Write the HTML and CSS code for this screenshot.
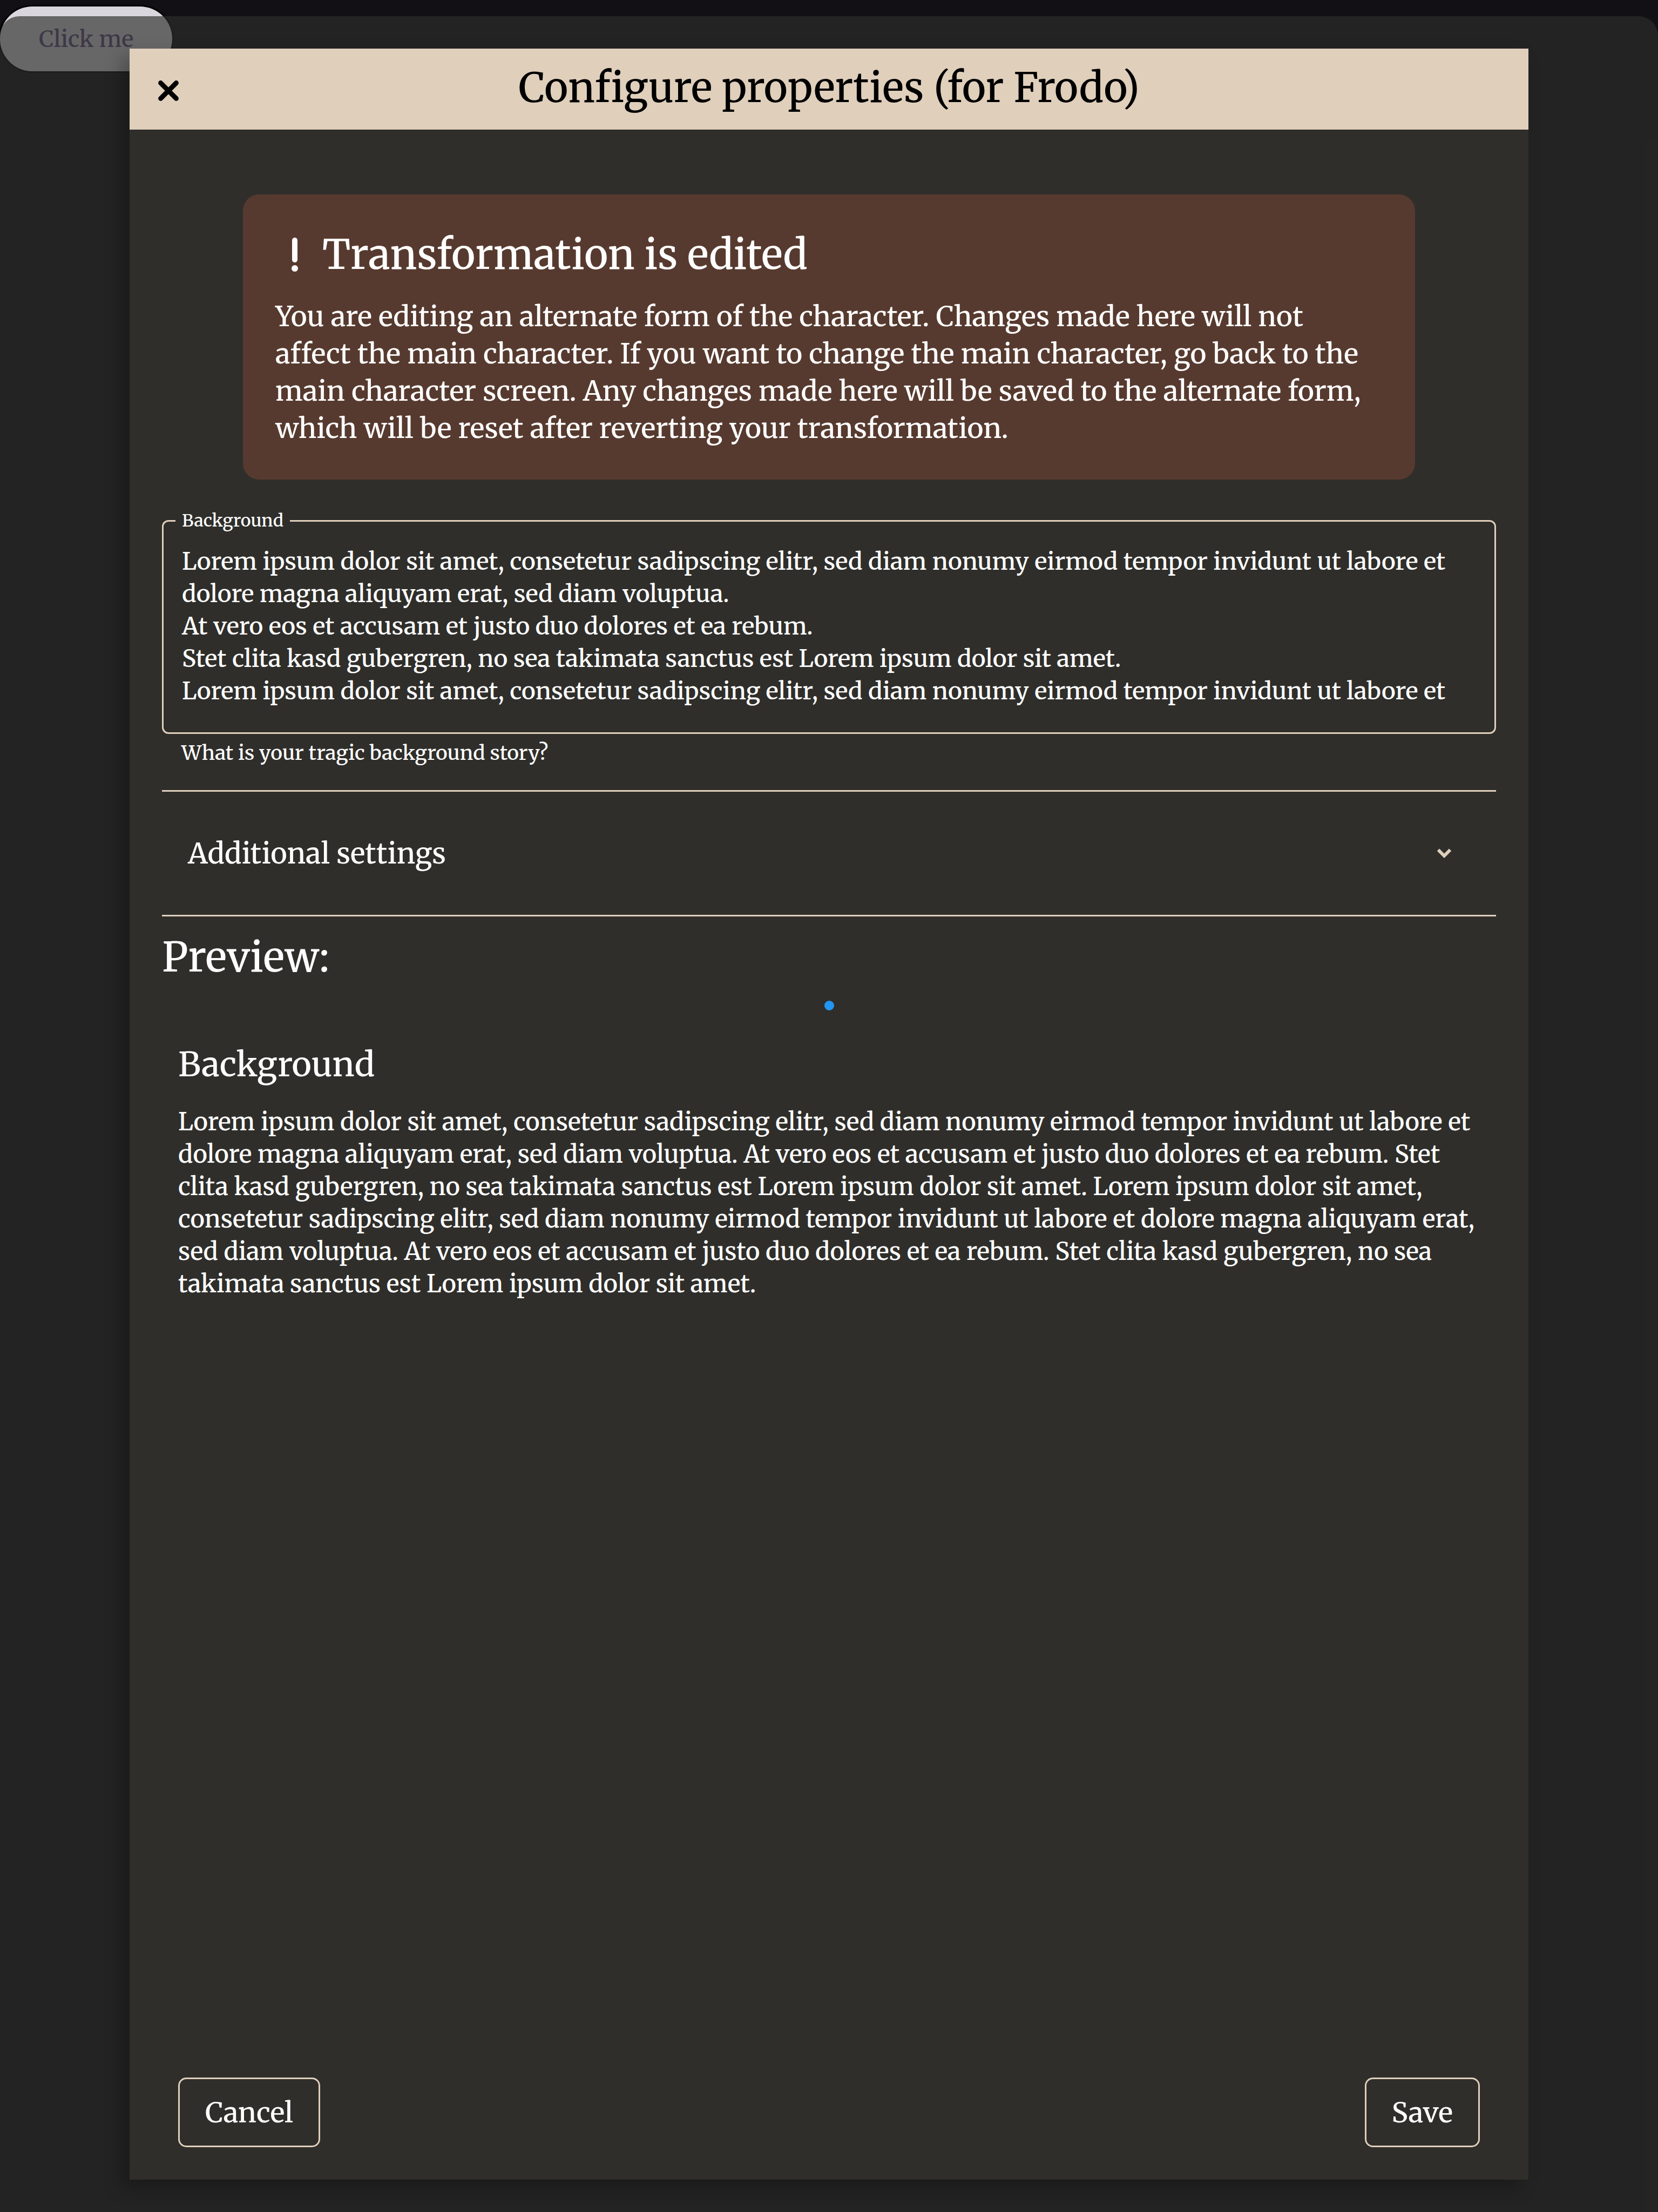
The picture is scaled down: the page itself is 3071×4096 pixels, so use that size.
FILE: index.html
```html
<!DOCTYPE html>
<html lang="en">
<head>
<meta charset="utf-8">
<title>Configure properties</title>
<link rel="stylesheet" href="styles.css">
</head>
<body>
<button class="trigger" type="button">Click me</button>

<div class="backdrop">
  <section class="dialog" role="dialog" aria-labelledby="dialog-title">
    <header class="dialog-header">
      <button class="close" type="button" aria-label="Close">
        <svg viewBox="0 0 24 24" aria-hidden="true"><path d="M7.2 7.2 16.8 16.8M16.8 7.2 7.2 16.8"/></svg>
      </button>
      <h1 class="dialog-title" id="dialog-title">Configure properties (for Frodo)</h1>
    </header>

    <div class="dialog-body">
      <div class="alert" role="alert">
        <h2 class="alert-title">
          <svg class="alert-icon" viewBox="0 0 72 72" aria-hidden="true"><rect x="31" y="5" width="10" height="46" rx="5"/><circle cx="36" cy="62" r="6"/></svg>
          Transformation is edited
        </h2>
        <p class="alert-text">You are editing an alternate form of the character. Changes made here will not affect the main character. If you want to change the main character, go back to the main character screen. Any changes made here will be saved to the alternate form, which will be reset after reverting your transformation.</p>
      </div>

      <fieldset class="field">
        <legend class="field-legend"><label for="background">Background</label></legend>
        <textarea class="field-input" id="background" rows="5" aria-describedby="background-hint">Lorem ipsum dolor sit amet, consetetur sadipscing elitr, sed diam nonumy eirmod tempor invidunt ut labore et dolore magna aliquyam erat, sed diam voluptua.
At vero eos et accusam et justo duo dolores et ea rebum.
Stet clita kasd gubergren, no sea takimata sanctus est Lorem ipsum dolor sit amet.
Lorem ipsum dolor sit amet, consetetur sadipscing elitr, sed diam nonumy eirmod tempor invidunt ut labore et dolore magna aliquyam erat, sed diam voluptua.
At vero eos et accusam et justo duo dolores et ea rebum.
Stet clita kasd gubergren, no sea takimata sanctus est Lorem ipsum dolor sit amet.</textarea>
      </fieldset>
      <p class="field-hint" id="background-hint">What is your tragic background story?</p>

      <button class="accordion" type="button" aria-expanded="false">
        <span>Additional settings</span>
        <svg class="chevron" viewBox="0 0 24 24" aria-hidden="true"><path d="M8.3 9.9 12 13.6 15.7 9.9"/></svg>
      </button>

      <h2 class="preview-title">Preview:</h2>
      <span class="dot"></span>
      <article class="preview">
        <h3 class="preview-heading">Background</h3>
        <p class="preview-text">Lorem ipsum dolor sit amet, consetetur sadipscing elitr, sed diam nonumy eirmod tempor invidunt ut labore et dolore magna aliquyam erat, sed diam voluptua. At vero eos et accusam et justo duo dolores et ea rebum. Stet clita kasd gubergren, no sea takimata sanctus est Lorem ipsum dolor sit amet. Lorem ipsum dolor sit amet, consetetur sadipscing elitr, sed diam nonumy eirmod tempor invidunt ut labore et dolore magna aliquyam erat, sed diam voluptua. At vero eos et accusam et justo duo dolores et ea rebum. Stet clita kasd gubergren, no sea takimata sanctus est Lorem ipsum dolor sit amet.</p>
      </article>
    </div>

    <footer class="dialog-footer">
      <button class="action" type="button">Cancel</button>
      <button class="action" type="button">Save</button>
    </footer>
  </section>
</div>
</body>
</html>
```
FILE: styles.css
```css
:root {
  --accent: #dfcfbb;
  --surface: #2f2e2a;
  --font: Merriweather, "DejaVu Serif Condensed", serif;
}

* { box-sizing: border-box; }

body {
  margin: 0;
  min-height: 100vh;
  background: #131015;
  color: #fff;
  font-family: var(--font);
  font-size: 44px;
  font-weight: 500;
  line-height: 60px;
}

h1, h2, h3, p { margin: 0; font-weight: inherit; }

button, textarea {
  margin: 0;
  padding: 0;
  border: 0;
  background: none;
  color: inherit;
  font-family: inherit;
  font-weight: inherit;
}

.trigger {
  display: block;
  margin-top: 12px;
  height: 120px;
  padding: 0 72px;
  border-radius: 60px;
  background: #dad6dd;
  color: #5b4d7c;
  font-size: 42px;
  box-shadow: 0 0 0 3px #000;
}

.backdrop {
  position: absolute;
  top: 30px;
  left: 0;
  width: 100%;
  min-height: calc(100vh - 30px);
  display: flex;
  padding: 60px 240px;
  border-radius: 36px 36px 0 0;
  background: rgba(45, 46, 44, 0.66);
}

.dialog {
  flex: 1;
  min-width: 0;
  display: flex;
  flex-direction: column;
  background: var(--surface);
  box-shadow: -15px 15px 30px rgba(0, 0, 0, 0.25);
}

.dialog-header {
  display: grid;
  grid-template-columns: 144px 1fr 144px;
  align-items: center;
  height: 150px;
  background: var(--accent);
  color: #000;
}

.close { height: 144px; color: inherit; }

.close svg {
  display: block;
  width: 72px;
  height: 72px;
  margin: 6px auto 0;
  fill: none;
  stroke: currentColor;
  stroke-width: 3;
  stroke-linecap: round;
}

.dialog-title {
  padding-bottom: 6px;
  font-size: 75px;
  line-height: 90px;
  text-align: center;
}

.dialog-body {
  flex: 1;
  display: flex;
  flex-direction: column;
  padding: 120px 60px 60px;
}

.alert {
  margin: 0 150px 56px;
  padding: 60px;
  border-radius: 30px;
  background: #573a2f;
}

.alert-title {
  display: flex;
  align-items: center;
  gap: 15px;
  margin-bottom: 30px;
  font-size: 75px;
  line-height: 102px;
}

.alert-icon { width: 72px; height: 72px; fill: currentColor; }

.alert-text {
  padding-right: 20px;
  font-size: 51px;
  line-height: 69px;
}

.field {
  min-width: 0;
  margin: 0;
  padding: 25px 22px 46px;
  border: 3px solid var(--accent);
  border-radius: 12px;
}

.field-legend {
  padding: 0 12px;
  font-size: 32px;
  line-height: 41px;
}

.field-input {
  display: block;
  width: 100%;
  padding: 0 12px;
  overflow: hidden;
  resize: none;
  font-size: 44px;
  line-height: 60px;
}

.field-hint {
  margin-bottom: 45px;
  padding: 11px 36px 0;
  font-size: 37px;
  line-height: 48px;
}

.accordion {
  display: flex;
  align-items: center;
  justify-content: space-between;
  height: 234px;
  padding: 0 60px 0 48px;
  border: solid var(--accent);
  border-width: 3px 0;
  font-size: 52px;
  text-align: left;
}

.chevron {
  width: 72px;
  height: 72px;
  fill: none;
  stroke: var(--accent);
  stroke-width: 2;
}

.preview-title {
  margin: 30px 0 36px;
  font-size: 75px;
  line-height: 90px;
}

.dot {
  align-self: center;
  width: 18px;
  height: 18px;
  border-radius: 50%;
  background: #2196f3;
}

.preview { padding: 61px 20px 0 30px; }

.preview-heading {
  margin-bottom: 37px;
  font-size: 62px;
  line-height: 78px;
}

.preview-text { font-size: 45px; }

.dialog-footer {
  display: flex;
  justify-content: space-between;
  padding: 0 90px 60px;
}

.action {
  height: 129px;
  padding: 0 47px;
  border: 3px solid var(--accent);
  border-radius: 15px;
  font-size: 51px;
}
```
